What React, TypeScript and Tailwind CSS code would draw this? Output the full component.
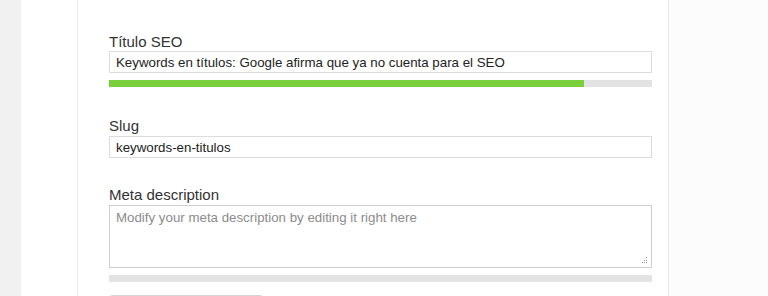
import React from "react";

const Label = ({children}: {children: React.ReactNode}) => (
    <label className="block text-[15px] leading-[19px] text-[#333]">{children}</label>
);

const Bar = ({pct}: {pct: number}) => (
    <div className="h-[7px] w-full bg-[#e3e3e3]">
        <div className="h-full bg-[#7ad03a]" style={{width: `${pct}%`}}></div>
    </div>
);

export default function App() {
    return (
        <div
            className="flex min-h-[296px] w-[768px] bg-[#f1f1f1] text-[#333]"
            style={{fontFamily: '"Liberation Sans", Arial, sans-serif'}}
        >
            <div className="w-[21px] shrink-0"></div>
            <div className="w-[56px] shrink-0 bg-white"></div>
            <div className="w-[592px] shrink-0 border-x border-[#e8e8e8] bg-white pl-[31px] pr-[16px] pt-[32px]">
                <Label>Título SEO</Label>
                <input
                    readOnly
                    value="Keywords en títulos: Google afirma que ya no cuenta para el SEO"
                    className="block h-[22px] w-full border border-[#dcdcdc] px-[6px] text-[13.3px] text-[#222] outline-none"
                />
                <div className="mt-[7px]">
                    <Bar pct={87.5}/>
                </div>

                <div className="mt-[29px]">
                    <Label>Slug</Label>
                    <input
                        readOnly
                        value="keywords-en-titulos"
                        className="mt-px block h-[22px] w-full border border-[#dcdcdc] px-[6px] text-[13.3px] text-[#222] outline-none"
                    />
                </div>

                <div className="mt-[27px]">
                    <Label>Meta description</Label>
                    <div className="relative mt-px">
                        <textarea
                            readOnly
                            placeholder="Modify your meta description by editing it right here"
                            className="block h-[63px] w-full resize-none border border-[#cfcfcf] px-[6px] py-[3px] text-[13.3px] leading-[18px] text-[#222] outline-none placeholder:text-[#8c8c8c]"
                        />
                        <svg className="absolute bottom-[4px] right-[4px]" width="7" height="7" viewBox="0 0 7 7">
                            <g fill="#9a9a9a">
                                <rect x="5" y="0" width="1" height="1"/>
                                <rect x="3" y="3" width="1" height="1"/>
                                <rect x="5" y="3" width="1" height="1"/>
                                <rect x="1" y="5" width="1" height="1"/>
                                <rect x="3" y="5" width="1" height="1"/>
                                <rect x="5" y="5" width="1" height="1"/>
                            </g>
                        </svg>
                    </div>
                    <div className="mt-[7px]">
                        <Bar pct={0}/>
                    </div>
                </div>

                <div className="mt-[13px] h-[24px] w-[154px] rounded-t-[3px] border border-[#d4d4d4] bg-[#f7f7f7]"></div>
            </div>
            <div className="flex-1 bg-[#fcfcfc]"></div>
        </div>
    );
}
